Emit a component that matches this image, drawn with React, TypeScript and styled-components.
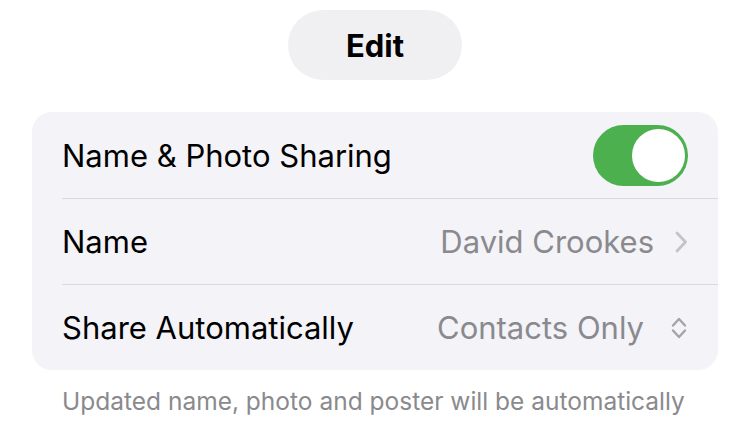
import React from 'react';
import styled, { createGlobalStyle } from 'styled-components';

const GlobalStyle = createGlobalStyle`
  html, body {
    margin: 0;
    padding: 0;
    background: #ffffff;
  }
  body {
    font-family: Inter, "Liberation Sans", sans-serif;
    -webkit-font-smoothing: antialiased;
  }
`;

const Page = styled.div`
  width: 750px;
  height: 421px;
  overflow: hidden;
  display: flex;
  flex-direction: column;
  align-items: center;
  padding-top: 10px;
  box-sizing: border-box;
`;

const EditButton = styled.button`
  width: 174px;
  height: 70px;
  border: none;
  border-radius: 35px;
  background: #f0f0f3;
  font-family: Inter, "Liberation Sans", sans-serif;
  font-size: 31px;
  font-weight: 650;
  color: #000;
  padding: 0;
`;

const Card = styled.div`
  align-self: stretch;
  margin: 32px 32px 0;
  background: #f3f3f8;
  border-radius: 20px;
  display: flex;
  flex-direction: column;
`;

const Row = styled.div<{ $divider?: boolean }>`
  height: 86px;
  display: flex;
  align-items: center;
  margin-left: 30px;
  padding-right: 30px;
  box-sizing: border-box;
  border-top: ${p => (p.$divider ? '1px solid #d9d9de' : 'none')};
`;

const Label = styled.span`
  flex: 1;
  font-size: 31px;
  color: #000;
`;

const Value = styled.span`
  font-size: 31px;
  color: #8a8a8e;
`;

const Accessory = styled.span<{ $gap: number }>`
  display: flex;
  align-items: center;
  margin-left: ${p => p.$gap}px;
`;

const Toggle = styled.div`
  width: 95px;
  height: 61px;
  border-radius: 31px;
  background: #4cb04f;
  display: flex;
  align-items: center;
  justify-content: flex-end;
  padding: 0 3px;
  box-sizing: border-box;
`;

const Knob = styled.div`
  width: 53px;
  height: 53px;
  border-radius: 50%;
  background: #ffffff;
`;

const Footer = styled.p`
  align-self: stretch;
  margin: 16px 0 0 62px;
  font-size: 24.5px;
  color: #8a8a8e;
`;

const Chevron = () => (
  <svg width="14" height="22" viewBox="0 0 14 22">
    <path d="M3 2 L11.5 11 L3 20" fill="none" stroke="#c4c4c8" strokeWidth="2.8" strokeLinecap="round" strokeLinejoin="round" />
  </svg>
);

const UpDown = () => (
  <svg width="18" height="24" viewBox="0 0 18 24">
    <path d="M3 9.5 L9 3 L15 9.5 M3 14.5 L9 21 L15 14.5" fill="none" stroke="#a3a3a8" strokeWidth="2.4" strokeLinecap="round" strokeLinejoin="round" />
  </svg>
);

export default function App() {
  return (
    <>
      <GlobalStyle />
      <Page>
        <EditButton>Edit</EditButton>
        <Card>
          <Row>
            <Label>Name &amp; Photo Sharing</Label>
            <Toggle><Knob /></Toggle>
          </Row>
          <Row $divider>
            <Label>Name</Label>
            <Value>David Crookes</Value>
            <Accessory $gap={20}><Chevron /></Accessory>
          </Row>
          <Row $divider>
            <Label>Share Automatically</Label>
            <Value>Contacts Only</Value>
            <Accessory $gap={26}><UpDown /></Accessory>
          </Row>
        </Card>
        <Footer>Updated name, photo and poster will be automatically</Footer>
      </Page>
    </>
  );
}
